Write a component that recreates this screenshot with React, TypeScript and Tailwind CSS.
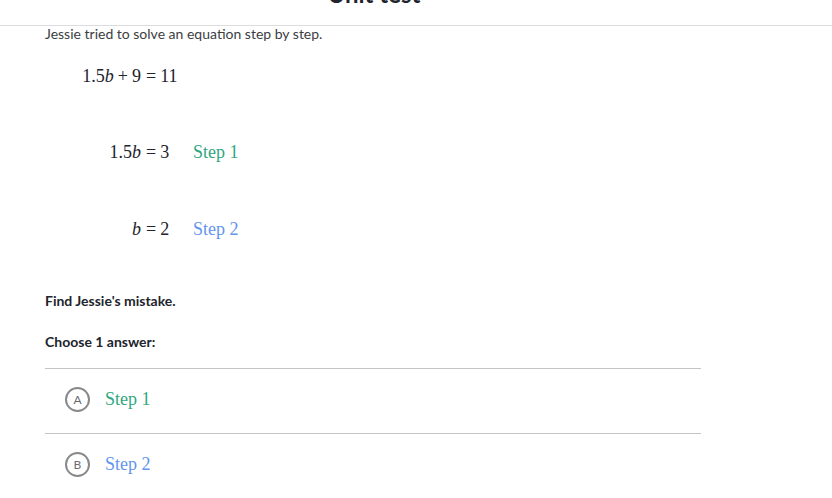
import React from "react";

const GREEN = "text-[#2fa77e]";
const BLUE = "text-[#6495ed]";

function MathRow({
  left,
  right,
  step,
  color,
}: {
  left: React.ReactNode;
  right: React.ReactNode;
  step?: string;
  color?: string;
}) {
  return (
    <>
      <div className="h-[76.5px] flex items-center justify-end">{left}</div>
      <div className="h-[76.5px] flex items-center">
        <span className="ml-[5px] mr-[4px]">=</span>
        {right}
      </div>
      <div className={`h-[76.5px] flex items-center ${color ?? ""}`}>{step}</div>
    </>
  );
}

function Choice({ letter, label, color }: { letter: string; label: string; color: string }) {
  return (
    <div className="border-t border-[#c4c4c6] h-[65px] flex items-center pl-5 gap-[15px] pb-[3px]">
      <span className="w-[25px] h-[25px] rounded-full border-2 border-[#87898c] flex items-center justify-center text-[12px] text-[#6b6d72] pt-[1px]">
        {letter}
      </span>
      <span className={`font-['Liberation_Serif',serif] text-[18px] ${color}`}>{label}</span>
    </div>
  );
}

export default function App() {
  return (
    <div className="w-[832px] h-[498px] overflow-hidden bg-white font-['Lato',sans-serif] text-[#3b3d42]">
      <header className="h-[26px] border-b border-[#dcdcde] flex justify-center pr-[84px]">
        <h1 className="text-[24px] leading-[28px] font-bold text-[#21242c] mt-[-20px]">Unit test</h1>
      </header>
      <main className="pl-[45px]">
        <p className="text-[14px] leading-[14px] mt-[1px]">Jessie tried to solve an equation step by step.</p>
        <div className="grid grid-cols-[96px_52px_auto] font-['Liberation_Serif',serif] text-[18px] text-[#21242c] -mt-[3px]">
          <MathRow
            left={
              <span>
                1.5<i>b</i>
                <span className="mx-[4px]">+</span>9
              </span>
            }
            right="11"
          />
          <MathRow
            left={
              <span>
                1.5<i>b</i>
              </span>
            }
            right="3"
            step="Step 1"
            color={GREEN}
          />
          <MathRow left={<i>b</i>} right="2" step="Step 2" color={BLUE} />
        </div>
        <p className="text-[14px] leading-[20px] font-bold text-[#21242c] mt-[23px]">Find Jessie's mistake.</p>
        <p className="text-[14px] leading-[20px] font-bold text-[#21242c] mt-[21px]">Choose 1 answer:</p>
        <div className="w-[656px] mt-[16px]">
          <Choice letter="A" label="Step 1" color={GREEN} />
          <Choice letter="B" label="Step 2" color={BLUE} />
        </div>
      </main>
    </div>
  );
}
